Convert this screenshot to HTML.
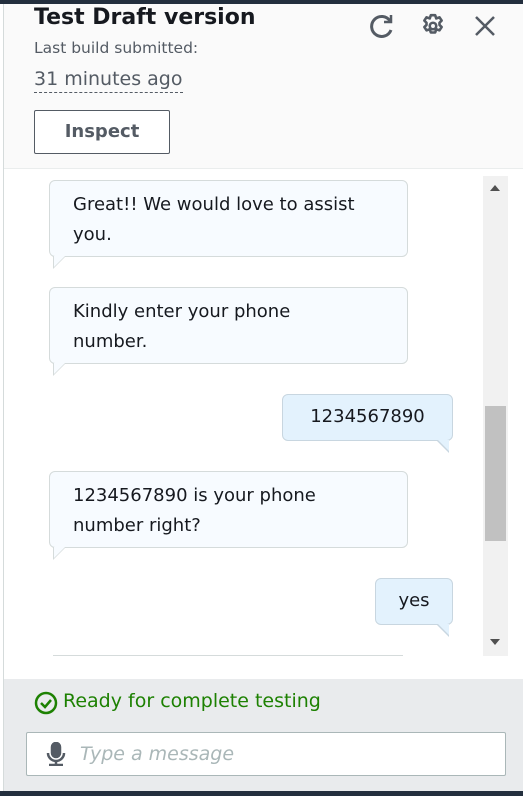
<html><head><style>
body{margin:0;width:523px;height:796px;overflow:hidden;background:#fafafa;font-family:"DejaVu Sans",sans-serif;position:relative}
.a{position:absolute}
.b{position:absolute;background:#f7fbff;border:1px solid #d5dbdb;border-radius:6px;box-sizing:border-box;font-size:18px;color:#16191f;padding:9px 40px 12px 23px;line-height:30px}
.r{background:#e3f2fd;border-color:#c8d6e0}
.t{position:absolute;width:0;height:0}
</style></head><body>
<div class="a" style="left:0;top:0;width:523px;height:4px;background:#232f3e"></div>
<div class="a" style="left:0;top:4px;width:3px;height:787px;background:#fff;border-right:1px solid #d5dbdb"></div>
<div class="a" style="left:34px;top:5px;font-size:22px;font-weight:bold;color:#16191f">Test Draft version</div>
<div class="a" style="left:34px;top:39px;font-size:15.5px;color:#545b64">Last build submitted:</div>
<div class="a" style="left:34px;top:66px;font-size:19px;color:#545b64;border-bottom:1px dashed #545b64;line-height:26px">31 minutes ago</div>
<div class="a" style="left:34px;top:110px;width:134px;height:42px;border:1px solid #545b64;border-radius:2px;background:#fff;font-size:18px;font-weight:bold;color:#545b64;text-align:center;line-height:42px">Inspect</div>
<svg class="a" style="left:368px;top:12px" width="28" height="28" viewBox="0 0 28 28" fill="none" stroke="#545b64" stroke-width="3"><path d="M22 9A10 10 0 1 0 23 18"/><path d="M23 3v7h-7" stroke-width="2.5"/></svg>
<svg class="a" style="left:420px;top:13px" width="26" height="26" viewBox="0 0 24 24" fill="none" stroke="#545b64" stroke-width="2.4" stroke-linejoin="round"><path d="M10 2h4l1 3 3-1 2 3-2 2 0 2 2 2-2 3-3-1-1 3h-4l-1-3-3 1-2-3 2-2v-2L4 7l2-3 3 1z"/><circle cx="12" cy="12" r="3"/></svg>
<svg class="a" style="left:474px;top:15px" width="22" height="22" viewBox="0 0 22 22" stroke="#545b64" stroke-width="2.5"><path d="M2 2L20 20M20 2L2 20"/></svg>
<div class="a" style="left:4px;top:168px;width:519px;height:511px;background:#fff;border-top:1px solid #eaeded"></div>
<div class="a" style="left:483px;top:176px;width:25px;height:480px;background:#f1f1f1"></div>
<div class="a" style="left:485px;top:406px;width:21px;height:135px;background:#c1c1c1"></div>
<div class="t" style="left:490px;top:185px;border:5px solid transparent;border-bottom:6px solid #505050;border-top:0"></div>
<div class="t" style="left:490px;top:639px;border:5px solid transparent;border-top:6px solid #505050;border-bottom:0"></div>
<div class="b" style="left:49px;top:180px;width:359px;height:77px">Great!! We would love to assist you.</div>
<div class="t" style="left:53px;top:256px;border-left:13px solid #d5dbdb;border-bottom:13px solid transparent"></div>
<div class="t" style="left:54px;top:256px;border-left:11px solid #f7fbff;border-bottom:11px solid transparent"></div>
<div class="b" style="left:49px;top:287px;width:359px;height:77px;padding-right:90px">Kindly enter your phone number.</div>
<div class="t" style="left:53px;top:363px;border-left:13px solid #d5dbdb;border-bottom:13px solid transparent"></div>
<div class="t" style="left:54px;top:363px;border-left:11px solid #f7fbff;border-bottom:11px solid transparent"></div>
<div class="b r" style="left:282px;top:394px;width:171px;height:47px;text-align:center;padding:7px 0">1234567890</div>
<div class="t" style="left:436px;top:440px;border-right:13px solid #c8d6e0;border-bottom:13px solid transparent"></div>
<div class="t" style="left:438px;top:440px;border-right:11px solid #e3f2fd;border-bottom:11px solid transparent"></div>
<div class="b" style="left:49px;top:471px;width:359px;height:77px;padding-right:60px">1234567890 is your phone number right?</div>
<div class="t" style="left:53px;top:547px;border-left:13px solid #d5dbdb;border-bottom:13px solid transparent"></div>
<div class="t" style="left:54px;top:547px;border-left:11px solid #f7fbff;border-bottom:11px solid transparent"></div>
<div class="b r" style="left:375px;top:578px;width:78px;height:47px;text-align:center;padding:7px 0">yes</div>
<div class="t" style="left:436px;top:624px;border-right:13px solid #c8d6e0;border-bottom:13px solid transparent"></div>
<div class="t" style="left:438px;top:624px;border-right:11px solid #e3f2fd;border-bottom:11px solid transparent"></div>
<div class="a" style="left:53px;top:655px;width:350px;height:1px;background:#d5dbdb"></div>
<div class="a" style="left:4px;top:679px;width:519px;height:112px;background:#e9ebed"></div>
<svg class="a" style="left:34px;top:691px" width="24" height="24" viewBox="0 0 24 24" fill="none" stroke="#1d8102" stroke-width="2.5"><circle cx="12" cy="12" r="10"/><path d="M7 12l4 4 6-7"/></svg>
<div class="a" style="left:63px;top:690px;font-size:19px;color:#1d8102">Ready for complete testing</div>
<div class="a" style="left:26px;top:732px;width:480px;height:44px;background:#fff;border:1px solid #aab7b8;border-radius:2px;box-sizing:border-box"></div>
<svg class="a" style="left:46px;top:742px" width="20" height="24" viewBox="0 0 20 24" fill="none" stroke="#545b64" stroke-width="2.5"><rect x="6" y="1" width="8" height="14" rx="4" fill="#545b64"/><path d="M2 11a8 8 0 0 0 16 0M10 19v3M3 23h14"/></svg>
<div class="a" style="left:80px;top:743px;font-size:19px;font-style:italic;color:#aab7b8">Type a message</div>
<div class="a" style="left:0;top:791px;width:523px;height:5px;background:#232f3e"></div>
</body></html>
